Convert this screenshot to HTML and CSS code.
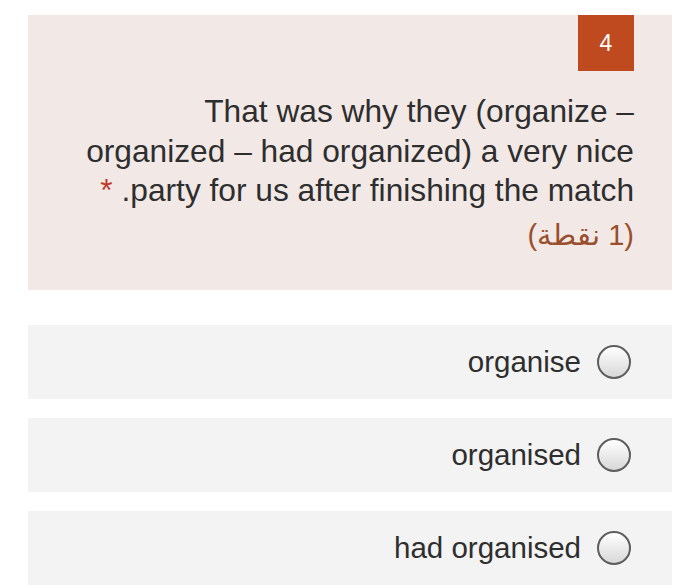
FILE: index.html
```html
<!DOCTYPE html>
<html lang="en">
<head>
<meta charset="utf-8">
<link rel="stylesheet" href="styles.css">
</head>
<body>
<div class="page">
  <section class="question">
    <div class="badge">4</div>
    <div class="qtext">
      <span class="line">That was why they (organize –</span>
      <span class="line">organized – had organized) a very nice</span>
      <span class="line"><span class="req">*</span> .party for us after finishing the match</span>
      <span class="line points" dir="rtl">(1 نقطة)</span>
    </div>
  </section>
  <div class="options">
    <label class="option"><span class="label">organise</span><span class="radio"></span></label>
    <label class="option"><span class="label">organised</span><span class="radio"></span></label>
    <label class="option"><span class="label">had organised</span><span class="radio"></span></label>
  </div>
</div>
</body>
</html>
```
FILE: styles.css
```css
html, body {
  margin: 0;
  padding: 0;
  background: #ffffff;
}
body {
  font-family: "Liberation Sans", Arial, "Noto Sans", sans-serif;
  color: #2e2e2e;
}
.page {
  padding: 15px 28px 0 28px;
  height: 586px;
  box-sizing: border-box;
  overflow: hidden;
}
.question {
  background: #f2e9e7;
  height: 275px;
  padding-right: 38px;
  display: flex;
  flex-direction: column;
  align-items: flex-end;
}
.badge {
  width: 56px;
  height: 56px;
  background: #bf4a1f;
  color: #ffffff;
  font-size: 23px;
  display: flex;
  align-items: center;
  justify-content: center;
}
.qtext {
  margin-top: 21px;
  text-align: right;
  font-size: 31.7px;
  line-height: 39.5px;
}
.line {
  display: block;
  white-space: nowrap;
}
.req {
  color: #c0392b;
}
.points {
  color: #9a4e2c;
  font-size: 29px;
  margin-top: 5px;
}
.options {
  margin-top: 35px;
  display: flex;
  flex-direction: column;
  gap: 19px;
}
.option {
  background: #f3f3f3;
  height: 74px;
  padding-right: 41px;
  display: flex;
  align-items: center;
  justify-content: flex-end;
  gap: 16px;
  font-size: 29.5px;
}
.radio {
  width: 30px;
  height: 30px;
  border: 2px solid #5d5d5d;
  border-radius: 50%;
  background: linear-gradient(#ffffff, #d8d8d8);
}
```
